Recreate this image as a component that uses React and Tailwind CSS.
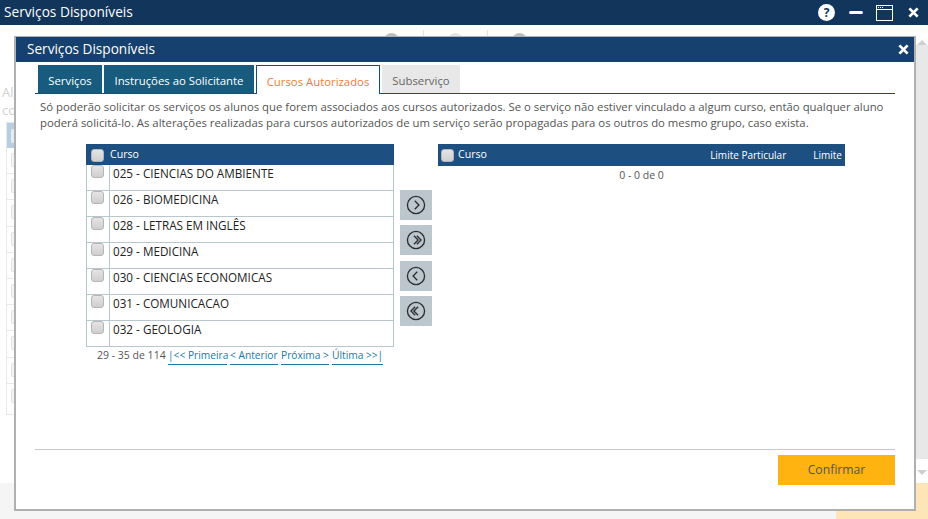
const rows = [
  "025 - CIENCIAS DO AMBIENTE",
  "026 - BIOMEDICINA",
  "028 - LETRAS EM INGLÊS",
  "029 - MEDICINA",
  "030 - CIENCIAS ECONOMICAS",
  "031 - COMUNICACAO",
  "032 - GEOLOGIA",
];

function Check({ className = "" }) {
  return <span className={"block w-[13px] h-[13px] rounded-[3px] border border-[#b5b5b5] bg-gradient-to-b from-[#e4e4e4] to-[#cfcfcf] " + className} />;
}

function CircleBtn({ dir, double, className = "" }) {
  const d = dir === "r" ? (double ? ["M9.5 7l5 5-5 5", "M13 7l5 5-5 5"] : ["M10.5 7l5 5-5 5"]) : (double ? ["M14.5 7l-5 5 5 5", "M11 7l-5 5 5 5"] : ["M13.5 7l-5 5 5 5"]);
  return (
    <div className={"w-[32px] h-[30px] bg-[#bcc6cd] flex items-center justify-center " + className}>
      <svg width="20" height="20" viewBox="0 0 24 24" fill="none" stroke="#2a2e33" strokeWidth="1.6">
        <circle cx="12" cy="12" r="10.3" />
        {d.map((p) => <path key={p} d={p} />)}
      </svg>
    </div>
  );
}

function X({ size = 12 }) {
  return (
    <svg width={size} height={size} viewBox="0 0 12 12" stroke="#fff" strokeWidth="3" fill="none">
      <path d="M1.5 1.5l9 9M10.5 1.5l-9 9" />
    </svg>
  );
}

export default function App() {
  return (
    <div className="relative w-[928px] h-[519px] overflow-hidden bg-white font-['Open_Sans',sans-serif] text-[11.35px] text-[#555]">
      {/* janela de fundo */}
      <header className="h-[25px] bg-[#12355b] flex items-center justify-between pl-1 pr-[9px] text-white">
        <span className="text-[13.7px]">Serviços Disponíveis</span>
        <div className="flex items-center">
          <span className="w-[17px] h-[17px] rounded-full bg-white text-[#12355b] text-[12px] font-bold flex items-center justify-center">?</span>
          <span className="ml-[14px] w-[14px] h-[3px] bg-white rounded-sm" />
          <svg className="ml-[13px]" width="17" height="16" viewBox="0 0 17 16" fill="none" stroke="#fff">
            <rect x="0.5" y="0.5" width="16" height="15" strokeWidth="1" />
            <path d="M0.5 4.5h16" strokeWidth="1" />
            <path d="M2 2.5h5" strokeWidth="1" strokeDasharray="1 1" />
          </svg>
          <span className="ml-[15px] flex"><X size={11} /></span>
        </div>
      </header>
      <div className="flex h-[458px]">
        <div className="flex-1 relative">
          <div className="absolute top-[8px] left-[384px] flex items-start">
            <span className="w-[15px] h-[15px] rounded-full bg-[#bdbdbd]" />
            <span className="ml-[24px] w-px h-[12px] -mt-[3px] bg-[#e2e2e2]" />
            <span className="ml-[24px] w-[15px] h-[15px] rounded-full bg-[#e4e4e4]" />
            <span className="ml-[24px] w-px h-[12px] -mt-[3px] bg-[#e2e2e2]" />
            <span className="ml-[24px] w-[15px] h-[15px] rounded-full bg-[#bdbdbd]" />
          </div>
          <div className="pl-[2px] pt-[58px] text-[#d0d0d0] text-[13px]">
            <p className="leading-[18px]">Alguns</p>
            <p className="leading-[18px]">cont</p>
            <div className="ml-[4px] mt-[3px] w-[60px] h-[293px] border border-[#e4eaea]">
              <div className="h-[25px] bg-[#b8cde0] pl-[4px] pt-[6px]">
                <span className="block w-[8px] h-[14px] bg-[#e6ecf2] rounded-[2px]" />
              </div>
              {Array.from({ length: 10 }).map((_, i) => (
                <div key={i} className="h-[26.2px] border-b border-[#e6ecec] last:border-b-0 pl-[4px] pt-[5px]">
                  <span className="block w-[8px] h-[14px] border border-[#e2e2e2] bg-[#f4f4f4] rounded-[2px]" />
                </div>
              ))}
            </div>
          </div>
        </div>
        <div className="w-[12px] flex flex-col">
          <div className="h-[20px] flex justify-center pt-[6px]">
            <span className="border-x-[5px] border-x-transparent border-b-[5px] border-b-[#cfcfcf]" />
          </div>
          <div className="flex-1 bg-[#e8e8e8]" />
          <div className="h-[24px] flex justify-center pt-[11px]">
            <span className="h-0 border-x-[5px] border-x-transparent border-t-[5px] border-t-[#cfcfcf]" />
          </div>
        </div>
      </div>
      <footer className="h-[36px] flex">
        <div className="flex-1 bg-[#f5f5f5]" />
        <div className="w-[92px] bg-[#fee5b8]" />
      </footer>

      {/* modal */}
      <section className="absolute left-[14px] top-[36px] w-[902px] h-[475px] border-2 border-t border-[#b0b0b0] bg-white flex flex-col">
        <div className="h-[25px] bg-[#16406e] flex items-center justify-between pl-[11px] pr-[5px] text-white shrink-0">
          <span className="text-[13.6px]">Serviços Disponíveis</span>
          <X size={11} />
        </div>
        <div className="mx-[19px] flex-1 flex flex-col">
          <div className="mt-[3px] h-[29px] flex items-end gap-[2px] border-b border-[#16506e] pl-[3px]">
            <div className="w-[64px] h-[28px] pt-[3px] flex items-center justify-center bg-[#175b7e] text-white">Serviços</div>
            <div className="w-[150px] h-[28px] pt-[3px] flex items-center justify-center bg-[#175b7e] text-white">Instruções ao Solicitante</div>
            <div className="w-[124px] h-[29px] pt-[3px] -mb-px flex items-center justify-center bg-white border border-b-0 border-[#16506e] text-[#f47a3a]">Cursos Autorizados</div>
            <div className="w-[78px] h-[28px] pt-[3px] flex items-center justify-center bg-[#e8e8e8] text-[#666]">Subserviço</div>
          </div>
          <p className="mt-[5px] ml-[5px] leading-[16px] whitespace-nowrap">
            Só poderão solicitar os serviços os alunos que forem associados aos cursos autorizados. Se o serviço não estiver vinculado a algum curso, então qualquer aluno
            <br />
            poderá solicitá-lo. As alterações realizadas para cursos autorizados de um serviço serão propagadas para os outros do mesmo grupo, caso exista.
          </p>
          <div className="mt-[13px] flex items-start">
            <div className="ml-[51px] w-[308px]">
              <div className="h-[21px] bg-[#1d5080] text-white flex items-center pl-[5px] gap-[6px] text-[10.6px]">
                <Check className="mt-[1px]" />
                <span>Curso</span>
              </div>
              <div className="border-x border-[#b8c7cc]">
                {rows.map((r) => (
                  <div key={r} className="h-[26px] flex border-b border-[#b8c7cc] bg-white">
                    <div className="w-[23px] border-r border-[#b8c7cc] pl-[4px]">
                      <Check />
                    </div>
                    <div className="pl-[3px] text-[#222] text-[11.7px] leading-[16px]">{r}</div>
                  </div>
                ))}
              </div>
              <div className="pl-[11px] flex text-[10.5px] leading-[17px] whitespace-nowrap">
                <span className="w-[71px]">29 - 35 de 114</span>
                <span className="flex gap-[3px] text-[#1679a8] text-[10.2px]">
                  <a className="w-[59px] border-b border-[#1679a8]">|&lt;&lt; Primeira</a>
                  <a className="w-[48px] border-b border-[#1679a8]">&lt; Anterior</a>
                  <a className="w-[48px] border-b border-[#1679a8]">Próxima &gt;</a>
                  <a className="w-[51px] border-b border-[#1679a8]">Última &gt;&gt;|</a>
                </span>
              </div>
            </div>
            <div className="ml-[6px] mt-[46px] flex flex-col gap-[5px]">
              <CircleBtn dir="r" />
              <CircleBtn dir="r" double />
              <CircleBtn dir="l" className="mt-px" />
              <CircleBtn dir="l" double />
            </div>
            <div className="ml-[6px] w-[407px]">
              <div className="h-[22px] bg-[#1d5080] text-white flex items-center pl-[3px] text-[10px]">
                <Check className="mt-[1px]" />
                <span className="ml-[4px] flex-1 text-[10.6px]">Curso</span>
                <span>Limite Particular</span>
                <span className="ml-[27px] mr-[3px]">Limite</span>
              </div>
              <div className="text-center text-[10.5px] leading-[16px] mt-[1px]">0 - 0 de 0</div>
            </div>
          </div>
          <div className="mt-auto border-t border-[#c8c8c8] h-[60px] flex justify-end pt-[5px]">
            <button className="w-[117px] h-[30px] bg-[#ffb311] text-[12.2px] text-[#555]">Confirmar</button>
          </div>
        </div>
      </section>
    </div>
  );
}
